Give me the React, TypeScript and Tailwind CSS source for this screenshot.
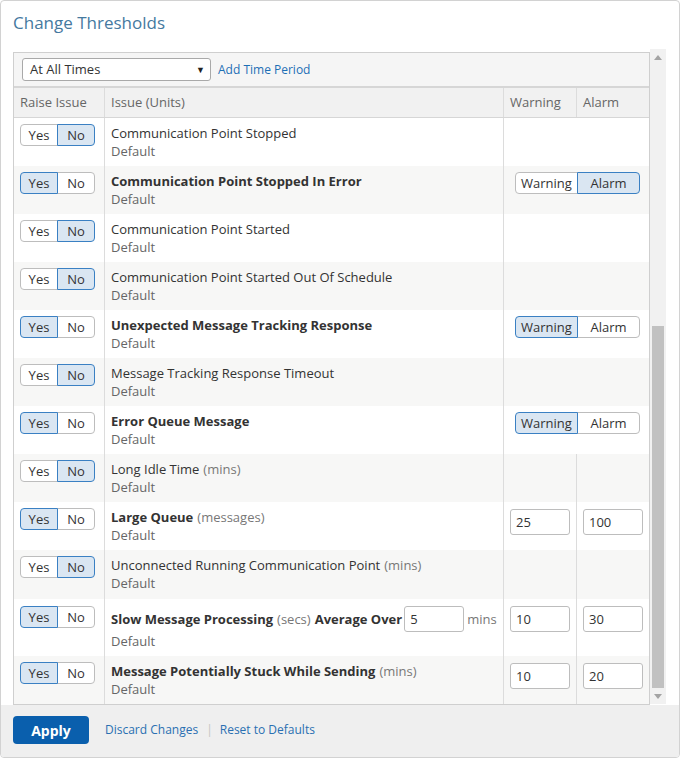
import React from 'react';

type Row = {
  title: string;
  units?: string;
  raise: boolean;
  kind: 'none' | 'toggle' | 'inputs';
  level?: 'Warning' | 'Alarm';
  warn?: string;
  alarm?: string;
  slow?: boolean;
};

const rows: Row[] = [
  { title: 'Communication Point Stopped', raise: false, kind: 'none' },
  { title: 'Communication Point Stopped In Error', raise: true, kind: 'toggle', level: 'Alarm' },
  { title: 'Communication Point Started', raise: false, kind: 'none' },
  { title: 'Communication Point Started Out Of Schedule', raise: false, kind: 'none' },
  { title: 'Unexpected Message Tracking Response', raise: true, kind: 'toggle', level: 'Warning' },
  { title: 'Message Tracking Response Timeout', raise: false, kind: 'none' },
  { title: 'Error Queue Message', raise: true, kind: 'toggle', level: 'Warning' },
  { title: 'Long Idle Time', units: '(mins)', raise: false, kind: 'inputs' },
  { title: 'Large Queue', units: '(messages)', raise: true, kind: 'inputs', warn: '25', alarm: '100' },
  { title: 'Unconnected Running Communication Point', units: '(mins)', raise: false, kind: 'inputs' },
  { title: 'Slow Message Processing', units: '(secs)', raise: true, kind: 'inputs', warn: '10', alarm: '30', slow: true },
  { title: 'Message Potentially Stuck While Sending', units: '(mins)', raise: true, kind: 'inputs', warn: '10', alarm: '20' },
];

const Segment = ({ label, on, first, width }: { label: string; on: boolean; first: boolean; width: string }) => (
  <span
    className={`${width} h-[22px] flex items-center justify-center border leading-none ${
      first ? 'rounded-l-[4px]' : 'rounded-r-[4px] -ml-px'
    } ${on ? 'bg-[#dae6f2] border-[#3a80c3] z-10 text-[#333]' : 'bg-white border-[#bdbdbd] text-[#333]'}`}
  >
    {label}
  </span>
);

const YesNo = ({ yes }: { yes: boolean }) => (
  <div className="flex relative">
    <Segment label="Yes" on={yes} first width="w-[38px]" />
    <Segment label="No" on={!yes} first={false} width="w-[38px]" />
  </div>
);

const LevelToggle = ({ level }: { level: 'Warning' | 'Alarm' }) => (
  <div className="flex relative">
    <Segment label="Warning" on={level === 'Warning'} first width="w-[63px]" />
    <Segment label="Alarm" on={level === 'Alarm'} first={false} width="w-[63px]" />
  </div>
);

const NumInput = ({ value }: { value?: string }) =>
  value ? (
    <input
      readOnly
      value={value}
      className="w-[60px] h-[26px] border border-[#bdbdbd] rounded-[3px] bg-white px-[5px] text-[13px] text-[#333] outline-none"
    />
  ) : null;

const App: React.FC = () => {
  return (
    <div className="w-[680px] h-[758px] bg-white border border-[#d2d2d2] rounded-[4px] flex flex-col font-['Open_Sans',sans-serif] text-[13px] text-[#333] overflow-hidden">
      {/* Title */}
      <div className="h-[48px] pl-[12px] pt-[10px] text-[17px] leading-[24px] text-[#45799f]">Change Thresholds</div>

      {/* Scroll area */}
      <div className="flex h-[656px] pl-[12px] pr-[12px]">
        <div className="w-[637px] pt-[3px]">
          <div className="border border-[#cfcfcf]">
            {/* Period selector */}
            <div className="h-[33px] bg-[#f5f5f5] flex items-center pl-[8px]">
              <div className="w-[189px] h-[23px] bg-white border border-[#a9a9a9] rounded-[3px] flex items-center justify-between pl-[7px] pr-[5px]">
                <span>At All Times</span>
                <span className="text-[9px] text-[#222]">▼</span>
              </div>
              <span className="ml-[7px] text-[12px] text-[#1d6fb5]">Add Time Period</span>
            </div>

            {/* Header */}
            <div className="flex h-[32px] bg-[#f1f1f1] border-t-2 border-b border-[#d6d6d6] text-[#666]">
              <div className="w-[91px] border-r border-[#dcdcdc] pl-[6px] flex items-center">Raise Issue</div>
              <div className="w-[399px] border-r border-[#dcdcdc] pl-[6px] flex items-center">Issue (Units)</div>
              <div className="w-[73px] border-r border-[#dcdcdc] pl-[6px] flex items-center">Warning</div>
              <div className="w-[72px] pl-[6px] flex items-center">Alarm</div>
            </div>

            {/* Rows */}
            {rows.map((r, i) => (
              <div
                key={r.title}
                className={`flex ${r.slow ? 'h-[57px]' : i === 9 ? 'h-[49px]' : 'h-[48px]'} ${i % 2 ? 'bg-[#f7f7f6]' : 'bg-white'}`}
              >
                <div className={`w-[91px] border-r border-[#dcdcdc] pl-[6px] ${r.slow ? 'pt-[7px]' : 'pt-[6px]'}`}>
                  <YesNo yes={r.raise} />
                </div>
                <div className={`w-[399px] border-r border-[#dcdcdc] pl-[6px] leading-[18px] ${r.slow ? 'pt-[7px]' : 'pt-[6px]'}`}>
                  {r.slow ? (
                    <div className="flex items-center h-[26px]">
                      <span className={r.raise ? 'font-bold' : ''}>{r.title}</span>
                      <span className="ml-[4px] text-[#777]">{r.units}</span>
                      <span className="ml-[4px] font-bold">Average Over</span>
                      <input
                        readOnly
                        value="5"
                        className="ml-[2px] w-[60px] h-[26px] border border-[#bdbdbd] rounded-[3px] bg-white px-[5px] text-[13px] outline-none"
                      />
                      <span className="ml-[3px] text-[#777]">mins</span>
                    </div>
                  ) : (
                    <div>
                      <span className={r.raise ? 'font-bold' : ''}>{r.title}</span>
                      {r.units && <span className="ml-[4px] text-[#777]">{r.units}</span>}
                    </div>
                  )}
                  <div className="text-[#666]">Default</div>
                </div>
                {r.kind === 'inputs' ? (
                  <>
                    <div className="w-[73px] border-r border-[#dcdcdc] pl-[6px] pt-[7px]">
                      <NumInput value={r.warn} />
                    </div>
                    <div className="w-[72px] pl-[6px] pt-[7px]">
                      <NumInput value={r.alarm} />
                    </div>
                  </>
                ) : (
                  <div className="w-[145px] pl-[11px] pt-[6px]">
                    {r.kind === 'toggle' && r.level && <LevelToggle level={r.level} />}
                  </div>
                )}
              </div>
            ))}
          </div>
        </div>

        {/* Scrollbar */}
        <div className="w-[16px] h-[655px] bg-[#f1f1f1] flex flex-col">
          <div className="h-[16px] flex items-center justify-center">
            <svg width="8" height="5" viewBox="0 0 8 5">
              <path d="M4 0 L8 5 L0 5 Z" fill="#a3a3a3" />
            </svg>
          </div>
          <div className="flex-1 flex flex-col justify-end px-[2px]">
            <div className="h-[362px] bg-[#c1c1c1]" />
          </div>
          <div className="h-[16px] flex items-center justify-center">
            <svg width="8" height="5" viewBox="0 0 8 5">
              <path d="M0 0 L8 0 L4 5 Z" fill="#a3a3a3" />
            </svg>
          </div>
        </div>
      </div>

      {/* Footer */}
      <div className="flex-1 bg-[#efefef] flex items-center pl-[12px] pb-[2px]">
        <button className="w-[76px] h-[28px] bg-[#0a5fad] rounded-[4px] text-white font-bold text-[14px]">Apply</button>
        <span className="ml-[16px] text-[12px] text-[#2a6fb2]">Discard Changes</span>
        <span className="ml-[8px] text-[12px] text-[#c4c4c4]">|</span>
        <span className="ml-[7px] text-[12px] text-[#2a6fb2]">Reset to Defaults</span>
      </div>
    </div>
  );
};

export default App;
